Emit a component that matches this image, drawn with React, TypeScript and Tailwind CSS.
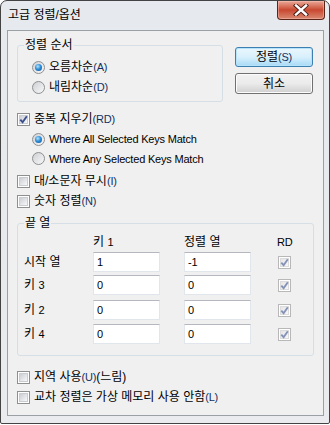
import React from "react";

const F = "font-['Liberation_Sans','Noto_Sans_CJK_KR',sans-serif]";

function Check({ checked = false, disabled = false }: { checked?: boolean; disabled?: boolean }) {
  return (
    <span
      className={`relative inline-flex h-[13px] w-[13px] shrink-0 items-center justify-center border bg-white ${
        disabled ? "border-[#b8b8b8]" : "border-[#8e8f8f]"
      }`}
    >
      <span
        className={`h-[9px] w-[9px] border bg-gradient-to-br ${
          disabled ? "border-[#dcdcdc] from-[#e6e6e6] to-[#f7f7f7]" : "border-[#c9ccd1] from-[#cbced4] to-[#f8f8f8]"
        }`}
      />
      {checked && (
        <svg className="absolute left-[0px] top-[0px]" width="11" height="11" viewBox="0 0 11 11">
          <path
            d="M2.3 5.6 L4.6 8.2 L8.8 2.2"
            stroke={disabled ? "#8593b8" : "#3b4f8f"}
            strokeWidth="1.9"
            fill="none"
          />
        </svg>
      )}
    </span>
  );
}

function Radio({ checked = false }: { checked?: boolean }) {
  return (
    <span className="inline-flex h-[13px] w-[13px] shrink-0 items-center justify-center rounded-full border border-[#8e8f8f] bg-gradient-to-br from-[#cdd0d5] to-[#f9f9f9]">
      {checked && (
        <span className="h-[7px] w-[7px] rounded-full bg-[radial-gradient(circle_at_40%_35%,#b5e6ff_0%,#2f8fd6_45%,#0c4796_100%)]" />
      )}
    </span>
  );
}

function Group({ title, className, children }: { title: string; className: string; children: React.ReactNode }) {
  return (
    <div className={`relative rounded-[3px] border border-[#d5dfe5] ${className}`}>
      <span className="absolute left-[6px] top-[-9px] bg-[#f0f0f0] px-[1px] text-[12px] leading-[16px] text-black">{title}</span>
      {children}
    </div>
  );
}

const L = ({ children, className = "" }: { children: React.ReactNode; className?: string }) => (
  <span className={`text-[11px] tracking-[-0.2px] ${className}`}>{children}</span>
);

const Sc = ({ children }: { children: React.ReactNode }) => <L className="text-[#14305f]">{children}</L>;

function Input({ value }: { value: string }) {
  return (
    <div className="flex h-[20px] w-[67px] items-center border border-[#e1e6ec] border-t-[#b5b8be] bg-white pl-[3px] leading-none text-black">
      <L>{value}</L>
    </div>
  );
}

function Row({ label, a, b }: { label: React.ReactNode; a: string; b: string }) {
  return (
    <div className="flex h-[20px] items-center">
      <div className="w-[69px] text-[12px] leading-none">{label}</div>
      <Input value={a} />
      <div className="ml-[24px]">
        <Input value={b} />
      </div>
      <div className="ml-[27px] flex">
        <Check checked disabled />
      </div>
    </div>
  );
}

export default function App() {
  return (
    <div className={`h-[425px] w-[330px] bg-white ${F} text-black`}>
      <div className="relative flex h-[424px] w-[330px] flex-col rounded-t-[7px] rounded-b-[2px] border border-[#434343] bg-gradient-to-b from-[#e6e9ed] to-[#e9ebee]">
        <div className="flex h-[29px] items-start justify-between">
          <span className="ml-[7px] mt-[6px] text-[12px] leading-[16px] text-black">고급 정렬/옵션</span>
          <div className="mr-[4px] flex h-[19px] w-[48px] items-center justify-center rounded-b-[4px] border border-t-0 border-[#5b2418] bg-gradient-to-b from-[#e9a999] via-[#c8472f] to-[#d98871] shadow-[inset_0_0_0_1px_rgba(255,200,190,0.45)]">
            <svg width="16" height="12" viewBox="0 0 16 12">
              <path d="M3 1.5 L13 10.5 M13 1.5 L3 10.5" stroke="#4a1a12" strokeWidth="4.2" strokeLinecap="square" />
              <path d="M3 1.5 L13 10.5 M13 1.5 L3 10.5" stroke="#ffffff" strokeWidth="2.4" strokeLinecap="square" />
            </svg>
          </div>
        </div>
        <div className="ml-[6px] h-[386px] w-[317px] border border-[#9b9fa6] bg-[#f0f0f0] text-[12px]">
          <div className="flex pt-[14px]">
            <Group title="정렬 순서" className="ml-[9px] h-[57px] w-[206px]">
              <div className="flex flex-col pl-[14px] pt-[11px]">
                <div className="flex h-[20px] items-center gap-[4px]">
                  <Radio checked />
                  <span className="leading-none">오름차순<Sc>(A)</Sc></span>
                </div>
                <div className="flex h-[20px] items-center gap-[4px]">
                  <Radio />
                  <span className="leading-none">내림차순<Sc>(D)</Sc></span>
                </div>
              </div>
            </Group>
            <div className="ml-[12px] mt-[2px] flex flex-col gap-[6px]">
              <div className="flex h-[20px] w-[78px] items-center justify-center rounded-[3px] border border-[#3c7fb1] bg-gradient-to-b from-[#eaf6fd] via-[#d9f0fc] to-[#a7d9f5] shadow-[inset_0_0_0_1px_#b6e2fa] leading-none">
                정렬<Sc>(S)</Sc>
              </div>
              <div className="flex h-[21px] w-[78px] items-center justify-center rounded-[3px] border border-[#707070] bg-gradient-to-b from-[#f2f2f2] via-[#ebebeb] to-[#cfcfcf] shadow-[inset_0_0_0_1px_#fcfcfc] leading-none">
                취소
              </div>
            </div>
          </div>

          <div className="ml-[9px] mt-[7px] flex h-[20px] items-center gap-[4px]">
            <Check checked />
            <span className="leading-none">중복 지우기<Sc>(RD)</Sc></span>
          </div>
          <div className="ml-[24px] flex h-[20px] items-center gap-[4px]">
            <Radio checked />
            <span className="leading-none"><L>Where All Selected Keys Match</L></span>
          </div>
          <div className="ml-[24px] flex h-[19px] items-center gap-[4px]">
            <Radio />
            <span className="leading-none"><L>Where Any Selected Keys Match</L></span>
          </div>
          <div className="ml-[9px] mt-[3px] flex h-[20px] items-center gap-[4px]">
            <Check />
            <span className="leading-none">대/소문자 무시<Sc>(I)</Sc></span>
          </div>
          <div className="ml-[9px] flex h-[20px] items-center gap-[4px]">
            <Check />
            <span className="leading-none">숫자 정렬<Sc>(N)</Sc></span>
          </div>

          <Group title="끝 열" className="ml-[9px] mt-[12px] h-[133px] w-[297px]">
            <div className="flex flex-col pl-[6px] pt-[8px]">
              <div className="flex h-[20px] items-center leading-none">
                <div className="w-[69px]" />
                <div className="w-[67px]">키 <L>1</L></div>
                <div className="ml-[24px] w-[67px]">정렬 열</div>
                <div className="ml-[26px]"><L>RD</L></div>
              </div>
              <Row label="시작 열" a="1" b="-1" />
              <div className="mt-[3px]">
                <Row label={<>키 <L>3</L></>} a="0" b="0" />
              </div>
              <div className="mt-[5px]">
                <Row label={<>키 <L>2</L></>} a="0" b="0" />
              </div>
              <div className="mt-[4px]">
                <Row label={<>키 <L>4</L></>} a="0" b="0" />
              </div>
            </div>
          </Group>

          <div className="ml-[9px] mt-[11px] flex h-[20px] items-center gap-[4px]">
            <Check />
            <span className="leading-none">지역 사용<Sc>(U)</Sc>(느림)</span>
          </div>
          <div className="ml-[9px] flex h-[20px] items-center gap-[4px]">
            <Check />
            <span className="leading-none">교차 정렬은 가상 메모리 사용 안함<Sc>(L)</Sc></span>
          </div>
        </div>
      </div>
    </div>
  );
}
